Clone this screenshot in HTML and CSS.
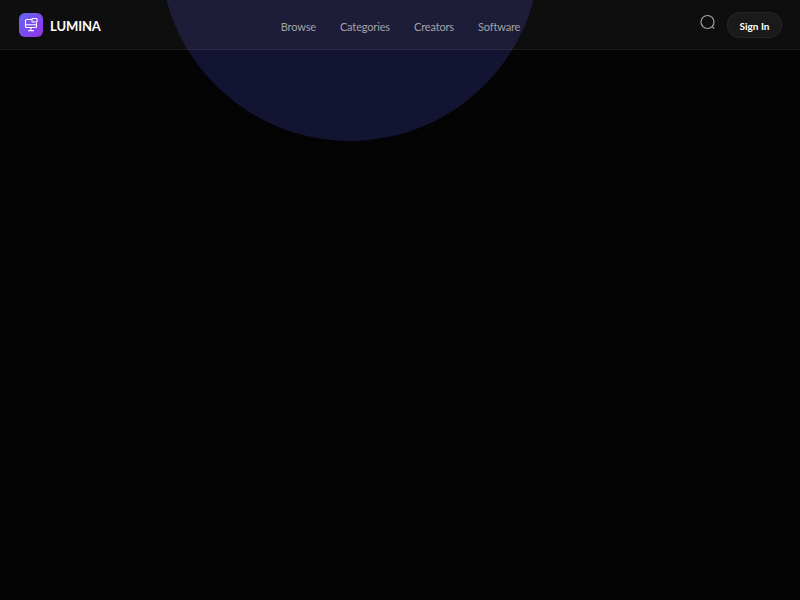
FILE: index.html
```html
<!DOCTYPE html>
<html lang="en">
<head>
    <meta charset="UTF-8">
    <meta name="viewport" content="width=device-width, initial-scale=1.0">
    <title>Lumina</title>
    <link rel="stylesheet" href="styles.css">
</head>
<body>

    <div class="glow"></div>

    <header class="nav-bar">
        <a href="#" class="nav-logo">
            <span class="logo-icon">
                <svg width="16" height="16" viewBox="0 0 16 16" fill="none" stroke="#fff" stroke-width="1.1">
                    <path d="M9 2.5H3.5a1 1 0 0 0-1 1v6a1 1 0 0 0 1 1h9a1 1 0 0 0 1-1V6"/>
                    <rect x="9" y="1.5" width="5" height="3.5" rx=".6"/>
                    <path d="M2.5 7.8h11M8 10.5v3M5.2 13.6h5.6"/>
                </svg>
            </span>
            <span class="logo-text">LUMINA</span>
        </a>
        <ul class="nav-links">
            <li><a href="#">Browse</a></li>
            <li><a href="#">Categories</a></li>
            <li><a href="#">Creators</a></li>
            <li><a href="#">Software</a></li>
        </ul>
        <div class="nav-actions">
            <button class="search-btn" aria-label="Search">
                <svg width="18" height="18" viewBox="0 0 18 18" fill="none" stroke="#a3a3a3" stroke-width="1.2">
                    <circle cx="8.5" cy="8" r="6.5"/>
                    <path d="M13.2 12.7l2 2"/>
                </svg>
            </button>
            <button class="signin-btn">Sign In</button>
        </div>
    </header>

</body>
</html>
```

FILE: styles.css
```css
* {
    margin: 0;
    padding: 0;
    box-sizing: border-box;
}

body {
    font-family: Lato, 'Liberation Sans', sans-serif;
    background: #040404;
    height: 100vh;
    overflow: hidden;
    position: relative;
}

/* Big circle behind the nav */
.glow {
    position: absolute;
    left: 160px;
    top: -239px;
    width: 380px;
    height: 380px;
    border-radius: 50%;
    background: #131332;
}

.nav-bar {
    position: relative;
    height: 50px;
    padding: 0 18px 0 19px;
    display: grid;
    grid-template-columns: 1fr auto 1fr;
    align-items: center;
    background: rgba(255, 255, 255, 0.045);
    border-bottom: 1px solid rgba(255, 255, 255, 0.05);
}

.nav-logo {
    display: flex;
    align-items: center;
    gap: 7px;
    color: #fff;
    font-size: 13px;
    font-weight: 700;
    letter-spacing: -0.1px;
    text-decoration: none;
}

.logo-text {
    padding-top: 2px;
}

.logo-icon {
    width: 24px;
    height: 24px;
    margin-top: 1px;
    border-radius: 6px;
    display: flex;
    align-items: center;
    justify-content: center;
    background: linear-gradient(135deg, #6366f1, #9333ea);
}

.nav-links {
    display: flex;
    gap: 24px;
    list-style: none;
}

.nav-links a {
    color: #a3a3a3;
    font-size: 11px;
    letter-spacing: -0.15px;
    text-decoration: none;
}

.nav-actions {
    display: flex;
    align-items: center;
    justify-content: flex-end;
    gap: 10px;
}

.search-btn {
    display: flex;
    background: none;
    border: none;
    margin-top: -4px;
}

.signin-btn {
    width: 55px;
    height: 26px;
    padding-top: 3px;
    border: 1px solid rgba(255, 255, 255, 0.05);
    border-radius: 13px;
    background: rgba(255, 255, 255, 0.05);
    color: #fff;
    font-family: inherit;
    font-size: 10px;
    font-weight: 700;
}
```
